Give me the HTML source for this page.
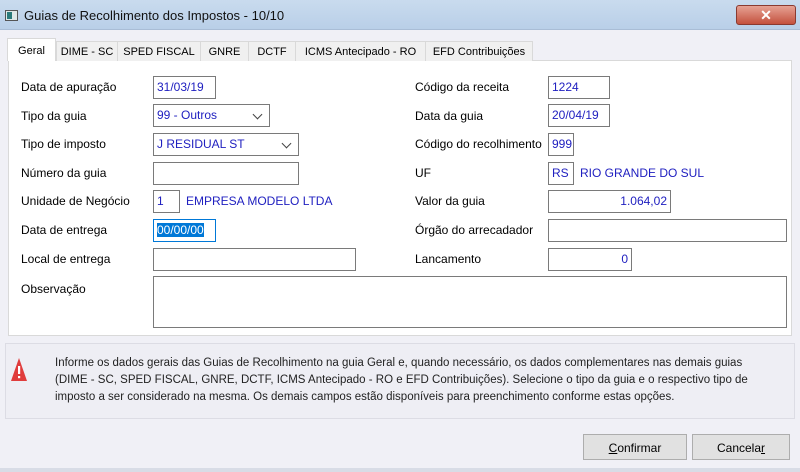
<!DOCTYPE html>
<html><head><meta charset="utf-8"><style>
*{box-sizing:border-box;margin:0;padding:0}
body{width:800px;height:472px;overflow:hidden;background:#f0f0f6;font-family:"Liberation Sans",sans-serif;font-size:12px;color:#000;position:relative}
.a{position:absolute}
.title{left:0;top:0;width:800px;height:30px;background:linear-gradient(#c9dbee,#b9cfe8);border-bottom:1px solid #a9bdd6}
.tab{top:41px;height:20px;border:1px solid #d9d9d9;border-bottom:none;background:#f0f0f0;font-size:11px;padding:4px 0 0;text-align:center;color:#000;white-space:nowrap}
.panel{left:8px;top:60px;width:784px;height:276px;background:#fff;border:1px solid #d9d9d9}
.lbl{font-size:12px;color:#000}
.in{border:1px solid #7a7a7a;background:#fff;color:#2020c0;font-size:12px;padding:3px 3px;height:23px}
.blue{color:#2020c0}
.cb::after{content:"";position:absolute;right:8px;top:6px;width:6px;height:6px;border-right:1px solid #444;border-bottom:1px solid #444;transform:rotate(45deg)}
.btn{top:434px;height:26px;border:1px solid #adadad;background:#e1e1e1;text-align:center;padding-top:6px;font-size:12px}
</style></head><body>
<div class="a title"></div>
<div class="a" style="left:5px;top:10px;width:13px;height:11px;border:1px solid #555;background:#dfe8e8"><div class="a" style="left:1px;top:1px;width:5px;height:7px;background:#2a7a7a"></div></div>
<div class="a" style="left:24px;top:8px;font-size:13px;color:#111">Guias de Recolhimento dos Impostos - 10/10</div>
<div class="a" style="left:736px;top:5px;width:60px;height:20px;border:1px solid #8a3a30;border-radius:3px;background:linear-gradient(#e6a294,#c4513e);color:#fff;font-weight:bold;text-align:center;font-size:14px;line-height:18px">✕</div>

<div class="a panel"></div>
<div class="a tab" style="left:7px;width:49px;top:38px;height:23px;background:#fff;padding-top:6px">Geral</div>
<div class="a tab" style="left:56px;width:62px">DIME - SC</div>
<div class="a tab" style="left:117px;width:84px">SPED FISCAL</div>
<div class="a tab" style="left:200px;width:49px">GNRE</div>
<div class="a tab" style="left:248px;width:48px">DCTF</div>
<div class="a tab" style="left:295px;width:131px">ICMS Antecipado - RO</div>
<div class="a tab" style="left:425px;width:108px">EFD Contribuições</div>

<div class="a lbl" style="left:21px;top:80px">Data de apuração</div>
<div class="a lbl" style="left:21px;top:109px">Tipo da guia</div>
<div class="a lbl" style="left:21px;top:137px">Tipo de imposto</div>
<div class="a lbl" style="left:21px;top:166px">Número da guia</div>
<div class="a lbl" style="left:21px;top:194px">Unidade de Negócio</div>
<div class="a lbl" style="left:21px;top:223px">Data de entrega</div>
<div class="a lbl" style="left:21px;top:252px">Local de entrega</div>
<div class="a lbl" style="left:21px;top:282px">Observação</div>

<div class="a in" style="left:153px;top:76px;width:63px">31/03/19</div>
<div class="a in cb" style="left:153px;top:104px;width:117px">99 - Outros</div>
<div class="a in cb" style="left:153px;top:133px;width:146px">J RESIDUAL ST</div>
<div class="a in" style="left:153px;top:162px;width:146px"></div>
<div class="a in" style="left:153px;top:190px;width:27px">1</div>
<div class="a blue" style="left:186px;top:194px">EMPRESA MODELO LTDA</div>
<div class="a in" style="left:153px;top:219px;width:63px;border-color:#0078d7"><span style="background:#0078d7;color:#fff">00/00/00</span></div>
<div class="a in" style="left:153px;top:248px;width:203px"></div>
<div class="a in" style="left:153px;top:276px;width:634px;height:52px"></div>

<div class="a lbl" style="left:415px;top:80px">Código da receita</div>
<div class="a lbl" style="left:415px;top:109px">Data da guia</div>
<div class="a lbl" style="left:415px;top:137px">Código do recolhimento</div>
<div class="a lbl" style="left:415px;top:166px">UF</div>
<div class="a lbl" style="left:415px;top:194px">Valor da guia</div>
<div class="a lbl" style="left:415px;top:223px">Órgão do arrecadador</div>
<div class="a lbl" style="left:415px;top:252px">Lancamento</div>

<div class="a in" style="left:548px;top:76px;width:62px">1224</div>
<div class="a in" style="left:548px;top:104px;width:62px">20/04/19</div>
<div class="a in" style="left:548px;top:133px;width:26px">999</div>
<div class="a in" style="left:548px;top:162px;width:26px">RS</div>
<div class="a blue" style="left:580px;top:166px">RIO GRANDE DO SUL</div>
<div class="a in" style="left:548px;top:190px;width:123px;text-align:right">1.064,02</div>
<div class="a in" style="left:548px;top:219px;width:239px"></div>
<div class="a in" style="left:548px;top:248px;width:84px;text-align:right">0</div>

<div class="a" style="left:5px;top:343px;width:790px;height:76px;border:1px solid #dcdce4;background:#eeeef4"></div>
<svg class="a" style="left:10px;top:357px" width="18" height="25"><path d="M9 1 L17 24 L1 24 Z" fill="#e03c3c"/><rect x="8" y="9" width="2.2" height="8" fill="#fff"/><rect x="8" y="19" width="2.2" height="2.2" fill="#fff"/></svg>
<div class="a" style="left:55px;top:355px;font-size:11.5px;line-height:17px;color:#222;width:740px">Informe os dados gerais das Guias de Recolhimento na guia Geral e, quando necessário, os dados complementares nas demais guias<br>(DIME - SC, SPED FISCAL, GNRE, DCTF, ICMS Antecipado - RO e EFD Contribuições). Selecione o tipo da guia e o respectivo tipo de<br>imposto a ser considerado na mesma. Os demais campos estão disponíveis para preenchimento conforme estas opções.</div>

<div class="a btn" style="left:583px;width:104px"><u>C</u>onfirmar</div>
<div class="a btn" style="left:692px;width:98px">Cancela<u>r</u></div>
<div class="a" style="left:0;top:468px;width:800px;height:4px;background:#d8dce6"></div>
</body></html>
